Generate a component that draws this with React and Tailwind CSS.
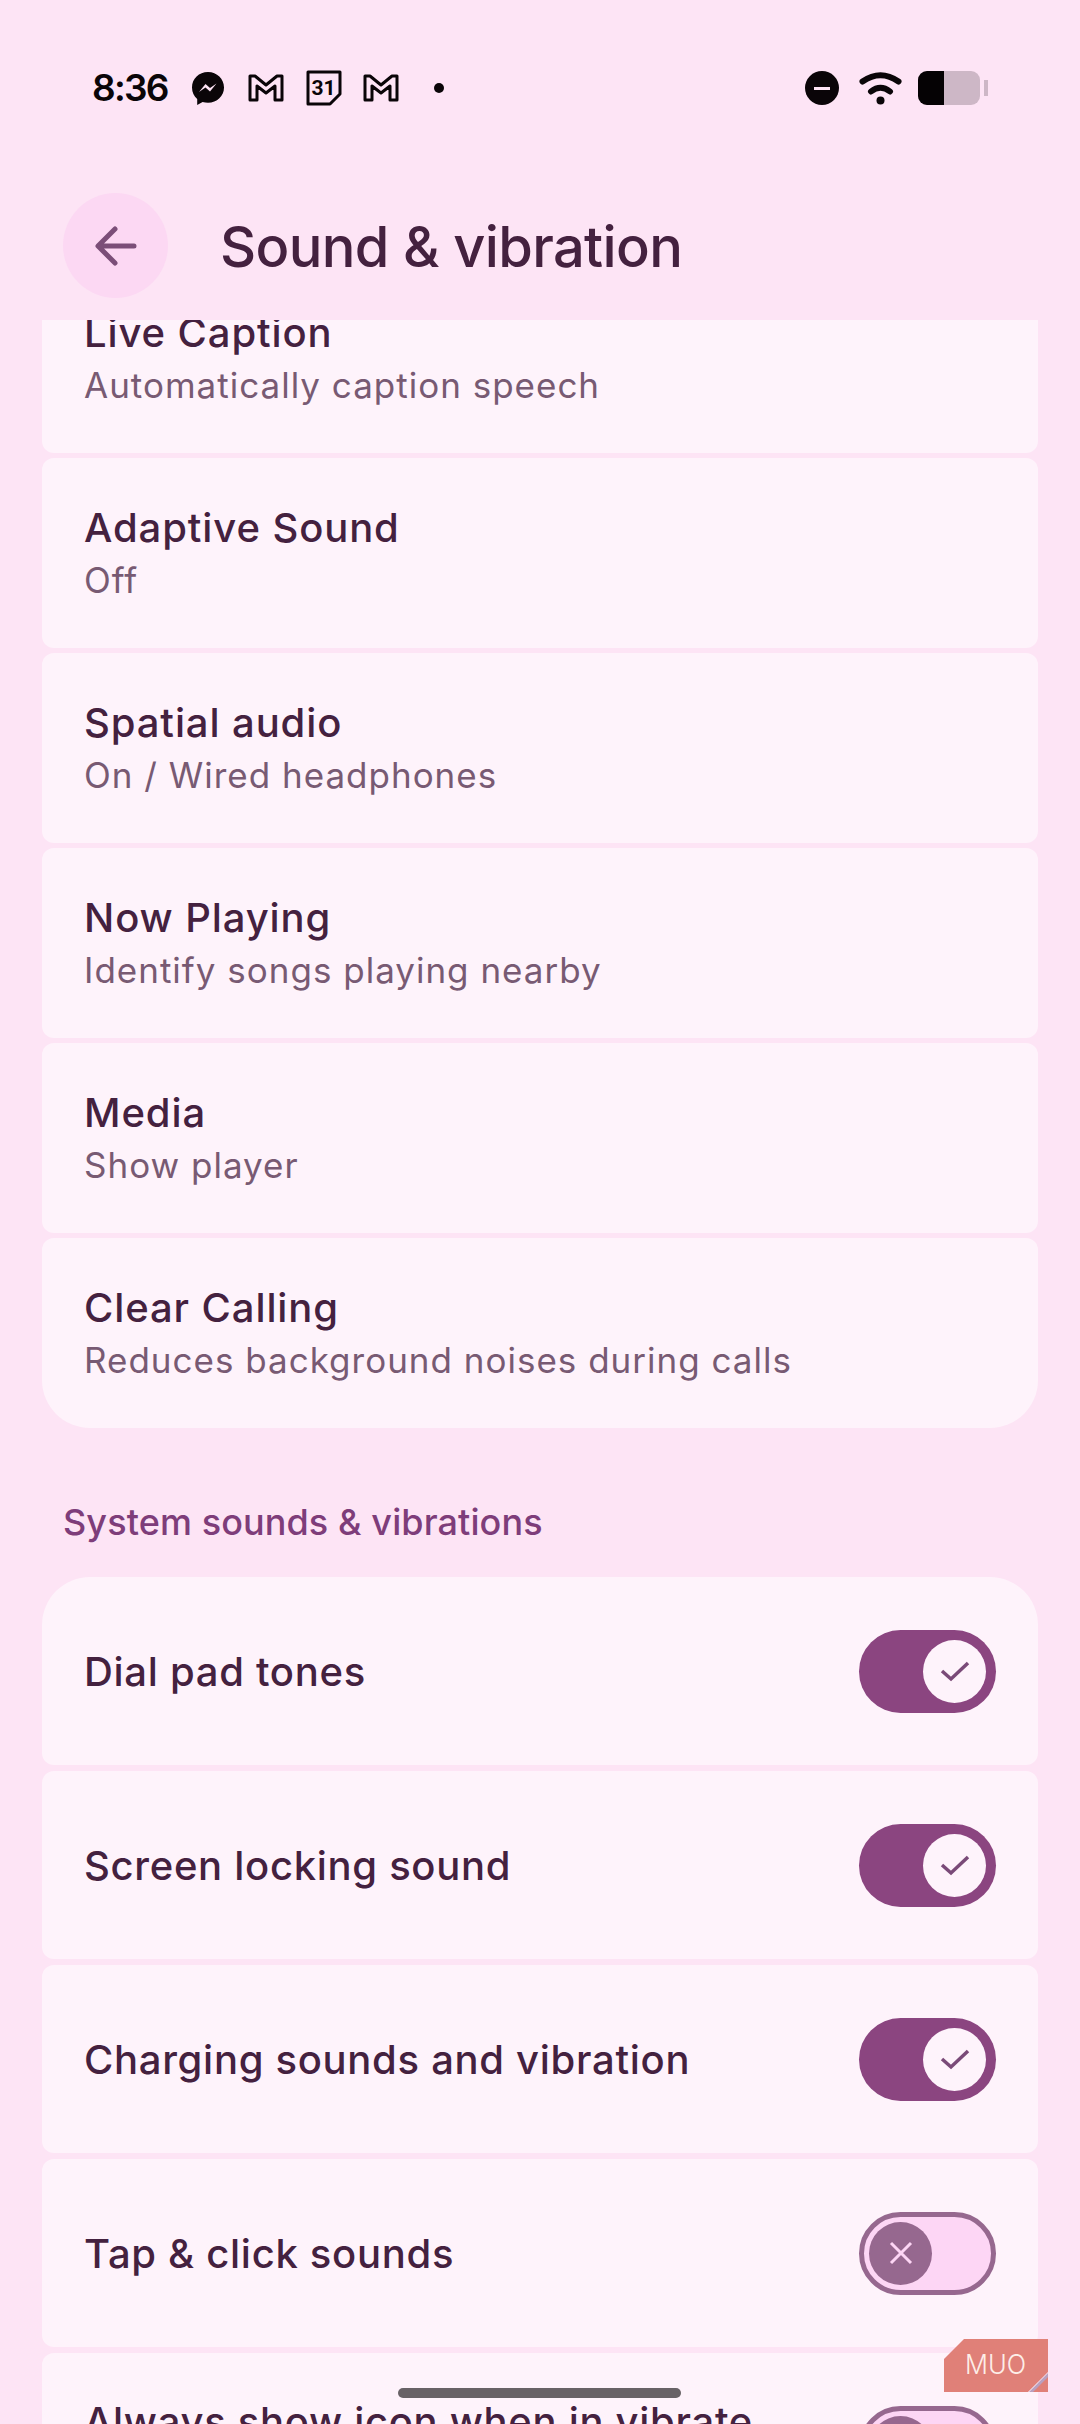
import React from "react";

const FONT = "font-['Inter','Liberation_Sans',sans-serif]";

function GmailOutline() {
  return (
    <svg width="36" height="28" viewBox="0 0 36 28" fill="none" stroke="#0a0508" strokeWidth="3" strokeLinejoin="round">
      <path d="M2 2h5l11 9 11-9h5v24h-7V12l-9 7-9-7v14H2z" />
    </svg>
  );
}

function Calendar() {
  return (
    <svg width="36" height="36" viewBox="0 0 36 36" fill="none">
      <path d="M2 2h32v22l-10 10H2z" stroke="#0a0508" strokeWidth="3" strokeLinejoin="round" />
      <text x="17.5" y="25" textAnchor="middle" fontSize="21" fontWeight="700" fontFamily="Roboto, sans-serif" fill="#0a0508">31</text>
    </svg>
  );
}

function Messenger() {
  return (
    <svg width="34" height="35" viewBox="0 0 34 35">
      <path d="M17 1C8 1 1 7.700 1 16.500c0 4.700 2 8.700 5.200 11.400V34l5.400-3c1.700.5 3.500.8 5.400.8 9 0 16-6.700 16-15.300S26 1 17 1z" fill="#0a0508" />
      <path d="M8 21l6.500-8 4.500 4 6.500-4.500-6.500 8-4.500-4z" fill="#fde4f5" />
    </svg>
  );
}

function Wifi() {
  return (
    <svg width="43" height="33" viewBox="0 0 43 33" fill="none" stroke="#0a0508" strokeWidth="6" strokeLinecap="round">
      <path d="M3.500 9.500Q21.500-3 39.500 9.500" />
      <path d="M12 19.500Q21.500 12 31 19.500" />
      <circle cx="21.500" cy="28.500" r="4" fill="#0a0508" stroke="none" />
    </svg>
  );
}

function Row({ title, sub, rounded = "rounded-[12px]", height = "h-[190px]", extra = "" }) {
  return (
    <div className={`${height} ${rounded} ${extra} shrink-0 bg-[#fef3fb] px-[42px] flex flex-col justify-center`}>
      <div className="text-[40px] leading-[52px] pt-[2px] font-[450] tracking-[0.9px] text-[#44213f]">{title}</div>
      {sub && <div className="text-[35px] leading-[52px] tracking-[1px] text-[#785a73]">{sub}</div>}
    </div>
  );
}

function Toggle({ on }) {
  if (on) {
    return (
      <div className="w-[137px] h-[83px] rounded-full bg-[#8b4580] flex items-center justify-end pr-[10px] shrink-0">
        <div className="w-[63px] h-[63px] rounded-full bg-[#fef3fb] flex items-center justify-center">
          <svg width="30" height="22" viewBox="0 0 30 22" fill="none" stroke="#7a4a78" strokeWidth="3.500">
            <path d="M2 11l9 8L28 3" />
          </svg>
        </div>
      </div>
    );
  }
  return (
    <div className="w-[137px] h-[83px] rounded-full bg-[#fdd6f5] border-[5px] border-[#96688f] flex items-center pl-[5px] shrink-0">
      <div className="w-[63px] h-[63px] rounded-full bg-[#96688f] flex items-center justify-center">
        <svg width="24" height="24" viewBox="0 0 24 24" fill="none" stroke="#fdd6f5" strokeWidth="3">
          <path d="M2 2l20 20M22 2L2 22" />
        </svg>
      </div>
    </div>
  );
}

function ToggleRow({ title, on, rounded = "rounded-[12px]" }) {
  return (
    <div className={`h-[188px] ${rounded} shrink-0 bg-[#fef3fb] pl-[42px] pr-[42px] flex items-center justify-between`}>
      <div className="text-[40px] leading-[52px] pt-[1px] font-[450] tracking-[0.7px] text-[#44213f] whitespace-pre-line">{title}</div>
      <Toggle on={on} />
    </div>
  );
}

export default function App() {
  return (
    <div className={`${FONT} relative w-[1080px] h-[2424px] overflow-hidden bg-[#fde4f5] flex flex-col`}>
      <div className="h-[176px] shrink-0 flex items-center justify-between pl-[92px] pr-[92px]">
        <div className="flex items-center">
          <span className="text-[37px] font-semibold tracking-[-1.75px] text-[#0a0508] w-[99px]">8:36</span>
          <Messenger />
          <div className="ml-[23px]"><GmailOutline /></div>
          <div className="ml-[22px]"><Calendar /></div>
          <div className="ml-[21px]"><GmailOutline /></div>
          <div className="ml-[35px] w-[10px] h-[10px] rounded-full bg-[#0a0508]" />
        </div>
        <div className="flex items-center">
          <div className="w-[34px] h-[34px] rounded-full bg-[#0a0508] flex items-center justify-center">
            <div className="w-[16px] h-[3px] bg-[#fde4f5]" />
          </div>
          <div className="ml-[20px]"><Wifi /></div>
          <div className="ml-[16px] w-[62px] h-[34px] rounded-[9px] bg-[#cdb7c6] overflow-hidden">
            <div className="w-[26px] h-full bg-[#050204]" />
          </div>
          <div className="ml-[4px] w-[4px] h-[16px] bg-[#cdb7c6]" />
        </div>
      </div>

      <div className="h-[144px] shrink-0 flex items-start pl-[63px]">
        <div className="mt-[17px] w-[105px] h-[105px] rounded-full bg-[#fcd8f3] flex items-center justify-center">
          <svg width="42" height="40" viewBox="0 0 42 40" fill="none" stroke="#7b4e78" strokeWidth="5" strokeLinecap="round" strokeLinejoin="round">
            <path d="M39 20H4M20 3L3 20l17 17" />
          </svg>
        </div>
        <div className="ml-[52px] mt-[33px] text-[56px] leading-[76px] tracking-[-0.65px] font-[450] text-[#44213f]">Sound &amp; vibration</div>
      </div>

      <div className="flex-1 overflow-hidden px-[42px] flex flex-col">
        <div className="flex flex-col gap-[5px] -mt-[57px]">
          <Row title="Live Caption" sub="Automatically caption speech" />
          <Row title="Adaptive Sound" sub="Off" />
          <Row title="Spatial audio" sub="On / Wired headphones" />
          <Row title="Now Playing" sub="Identify songs playing nearby" />
          <Row title="Media" sub="Show player" />
          <Row title="Clear Calling" sub="Reduces background noises during calls" rounded="rounded-t-[12px] rounded-b-[48px]" />
        </div>
        <div className="h-[149px] shrink-0 pl-[21px] pt-[69px] text-[36px] leading-[50px] font-medium tracking-[0.1px] text-[#7e3d7a]">System sounds &amp; vibrations</div>
        <div className="flex flex-col gap-[6px]">
          <ToggleRow title="Dial pad tones" on rounded="rounded-t-[48px] rounded-b-[12px]" />
          <ToggleRow title="Screen locking sound" on />
          <ToggleRow title="Charging sounds and vibration" on />
          <ToggleRow title="Tap & click sounds" />
          <ToggleRow title={"Always show icon when in vibrate\nmode"} />
        </div>
      </div>

      <div className="absolute left-[398px] top-[2388px] w-[283px] h-[10px] rounded-full bg-[#686266]" />
      <svg className="absolute left-[944px] top-[2339px]" width="104" height="53" viewBox="0 0 104 53">
        <path d="M20 0H104V33L84 53H0V20z" fill="#e08078" />
        <path d="M104 36V53H88z" fill="#e08078" />
        <path d="M104 34L85 53h4l15-15z" fill="#b8a0c0" />
        <text x="21" y="35" fontSize="27" fontWeight="300" fontFamily="Inter, sans-serif" fill="#fdeee8" textLength="61" lengthAdjust="spacingAndGlyphs">MUO</text>
      </svg>
    </div>
  );
}
